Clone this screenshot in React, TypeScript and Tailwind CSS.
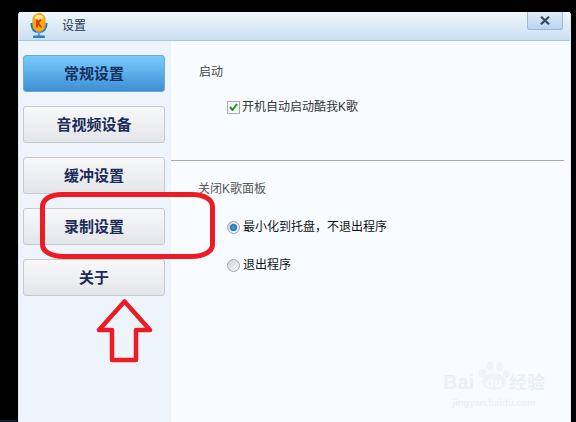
const navItems = ["常规设置", "音视频设备", "缓冲设置", "录制设置", "关于"];

const AppLogo = () => (
  <svg width="18" height="26" viewBox="0 0 18 26" className="shrink-0">
    <path d="M1.500 10c0 6 3 9 7.500 9s7.500-3 7.500-9" fill="none" stroke="#1f78c8" strokeWidth="2.200" />
    <rect x="7.800" y="18" width="2.400" height="5" fill="#5aa5e2" />
    <rect x="3" y="22.500" width="12" height="2.500" rx="1" fill="#2a7fc8" />
    <rect x="3" y="0.500" width="12" height="18" rx="6" fill="#f8b400" stroke="#e8912c" />
    <rect x="5" y="2" width="8" height="5" rx="2.500" fill="#ffe98a" />
    <path d="M7 6.500v8M7 11l4-4.500M8 10l3.500 4.500" fill="none" stroke="#e8340c" strokeWidth="2" />
  </svg>
);

const CloseIcon = () => (
  <svg width="10" height="9" viewBox="0 0 10 9">
    <path d="M1 .8l8 7.400M9 .8L1 8.200" stroke="#36465f" strokeWidth="2.200" fill="none" />
  </svg>
);

const Arrow = () => (
  <svg width="60" height="66" viewBox="0 0 60 66" className="absolute left-[96px] top-[298px]">
    <path
      d="M28.500 3.500L3 32h13v30h24V32h14z"
      fill="none"
      stroke="#ed1c24"
      strokeWidth="4.500"
      strokeLinejoin="round"
    />
  </svg>
);

const Circle = () => (
  <svg width="178" height="70" viewBox="0 0 178 70" className="absolute left-[40px] top-[192px]">
    <path
      d="M22 2.500h130c12 0 20.500 5 20.500 12v38c0 7-8.500 12-21 12H24c-13 0-21.500-5-21.500-12V15C2.500 7.500 10 2.500 22 2.500z"
      fill="none"
      stroke="#ed1c24"
      strokeWidth="5"
    />
  </svg>
);

const Paw = () => (
  <svg width="32" height="32" viewBox="0 0 34 32" className="absolute left-[35px] top-0" fill="#eef4f9">
    <ellipse cx="13" cy="5" rx="4" ry="5" />
    <ellipse cx="23" cy="6" rx="4" ry="5" />
    <ellipse cx="5" cy="13" rx="4" ry="4.500" />
    <ellipse cx="30" cy="14" rx="3.500" ry="4.500" />
    <ellipse cx="17" cy="22" rx="13" ry="9" />
  </svg>
);

const Watermark = () => (
  <div className="absolute bottom-[14px] right-[25px] flex w-[102px] flex-col items-center text-[#e9f0f6]">
    <div className="relative flex h-[32px] w-full items-end justify-between font-bold leading-none">
      <Paw />
      <span className="text-[20px]">Bai</span>
      <span className="absolute bottom-[3px] left-[43px] text-[13px] text-[#f8fcff]">du</span>
      <span className="text-[18px]">经验</span>
    </div>
    <div className="mt-[5px] text-[9.500px] font-bold leading-[11px]">jingyan.baidu.com</div>
  </div>
);

const Radio = ({ checked }: { checked?: boolean }) => (
  <span className="flex h-[13px] w-[13px] shrink-0 items-center justify-center rounded-full border border-[#a2a6aa] bg-gradient-to-br from-[#cfd2d5] to-[#f8f8f8]">
    {checked && <span className="h-[7px] w-[7px] rounded-full bg-radial from-[#3fb0e8] to-[#064f8f]" />}
  </span>
);

export default function App() {
  return (
    <div className="relative h-[422px] w-[576px] overflow-hidden bg-black pl-[18px] pr-[5px] pt-[12px] font-['Liberation_Sans','Noto_Sans_CJK_SC',sans-serif]">
      <div className="flex h-[410px] flex-col rounded-t-[3px] border-l border-r border-[#dce7f0] bg-[#f8fcff]">
        <div className="flex h-[28px] items-center bg-gradient-to-b from-[#f1f7fb] to-[#c9dff1] pl-[11px] pr-[7px]">
          <AppLogo />
          <span className="ml-[14px] text-xs text-[#2b3a55]">设置</span>
          <button className="ml-auto flex h-[18px] w-[36px] -translate-y-[5px] items-center justify-center rounded-b-[3px] border border-t-0 border-[#9cb8d8] bg-gradient-to-b from-[#dcebf8] to-[#b9d6f0]">
            <CloseIcon />
          </button>
        </div>
        <div className="h-px bg-[#a9c4de]" />
        <div className="flex flex-1">
          <div className="flex w-[152px] flex-col gap-[14px] bg-[#eef4fb] pl-[4px] pr-[6px] pt-[14px]">
            {navItems.map((item, i) =>
              i === 0 ? (
                <div
                  key={item}
                  className="flex h-[37px] items-center justify-center rounded-[3px] border border-[#6ea7d8] bg-gradient-to-b from-[#78ccfb] to-[#3d8fd4] pt-[2px] text-[15px] font-bold text-[#17305f]"
                >
                  {item}
                </div>
              ) : (
                <div
                  key={item}
                  className="flex h-[37px] items-center justify-center rounded-[3px] border border-[#c6cacd] bg-gradient-to-b from-[#f8f8f9] to-[#e3e6e9] pt-[2px] text-[15px] font-bold text-[#1b2b5c]"
                >
                  {item}
                </div>
              ),
            )}
          </div>
          <div className="relative flex-1 pt-[23px] text-xs">
            <div className="pl-[28px] text-[#444]">启动</div>
            <div className="mt-[19px] flex items-center gap-[2px] pl-[56px] text-[#333]">
              <span className="flex h-[13px] w-[13px] items-center justify-center border border-[#a3adb3] bg-[#f4f6f6]">
                <svg width="9" height="8" viewBox="0 0 9 8">
                  <path d="M1 4l2.500 3L8 1" fill="none" stroke="#1f9a2a" strokeWidth="2" />
                </svg>
              </span>
              <span>开机自动启动酷我K歌</span>
            </div>
            <div className="mt-[45px] mr-[6px] h-px bg-[#a8a8a8]" />
            <div className="mt-[20px] pl-[27px] text-[#555]">关闭K歌面板</div>
            <div className="mt-[22px] flex items-center gap-[3px] pl-[56px] text-[#111]">
              <Radio checked />
              <span>最小化到托盘，不退出程序</span>
            </div>
            <div className="mt-[22px] flex items-center gap-[3px] pl-[56px] text-[#111]">
              <Radio />
              <span>退出程序</span>
            </div>
            <Watermark />
          </div>
        </div>
      </div>
      <div className="absolute bottom-0 left-0 h-[2px] w-[17px] bg-[#0a1c36]" />
      <Circle />
      <Arrow />
    </div>
  );
}
